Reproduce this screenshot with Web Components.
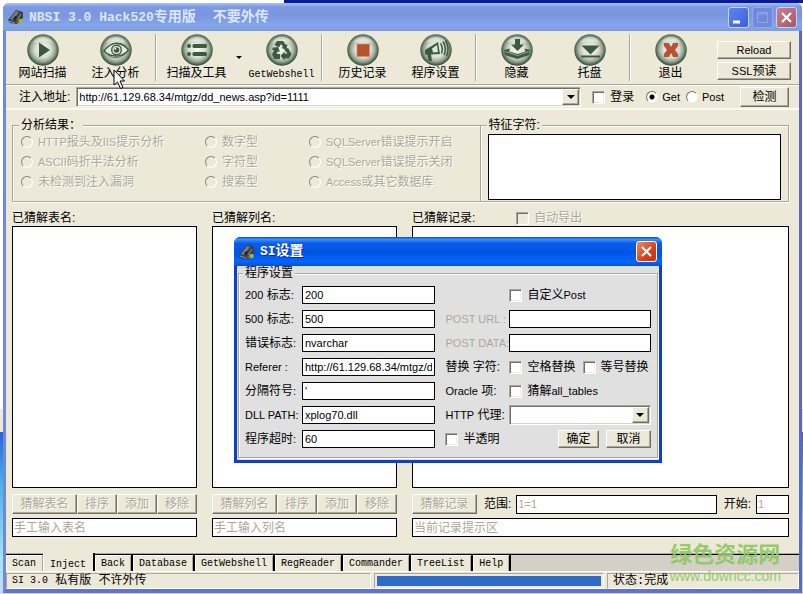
<!DOCTYPE html>
<html lang="zh-CN">
<head>
<meta charset="utf-8">
<title>NBSI 3.0</title>
<style>
html, body { margin: 0; min-height: 100vh; }
body {
  box-sizing: border-box;
  display: flex;
  padding: 3px 1px 1px 3px;
  font: 12px/14px "Liberation Sans", "Noto Sans CJK SC", sans-serif;
  color: #000;
  background:
    linear-gradient(90deg, #fff 284px, #0a1a96 284px) 0 0 / 100% 3px no-repeat,
    linear-gradient(#fff 409px, #ece9d8 409px 432px, #2a62d8 432px, #3fb0e4 480px, #a8e4f8 560px, #c8d8f8);
}
</style>
</head>
<body>
<app-window></app-window>
<script>
const latin = s => s.replace(/[\x21-\x7e](?:[\x20-\x7e]*[\x21-\x7e])?/g, m => `<span class="l">${m}</span>`);

const base = `
  *, *::before, *::after { box-sizing: border-box; }
  :host { --face: #ece9d8; --dim: #aca899; }
  .l { font-size: 11px; }
  .mono { font-family: "Liberation Mono", "Noto Sans CJK SC", monospace; }
  .mono .l { font-size: 10px; }
  button, input, select, textarea { font: inherit; color: inherit; margin: 0; border-radius: 0; outline: 0; }
  button { padding: 0; white-space: nowrap; }
  .btn { height: 20px; background: var(--btn, var(--face)); border: 1px solid; border-color: #fff #716f64 #716f64 #fff; box-shadow: inset -1px -1px #aca899; }
  .btn:disabled, .off { color: var(--dim); text-shadow: 1px 1px #fff; }
  .box { width: 100%; min-width: 0; height: 19px; padding: 0 2px; background: #fff; border: 1px solid #000; resize: none; display: block; font-size: 12px; }
  input.lat { font-size: 11px; }
  .box:disabled { color: #aca899; }
  .box::placeholder { color: #aca899; opacity: 1; }
  label { white-space: nowrap; }
  .opt { display: flex; align-items: center; gap: 5px; }
  input[type=checkbox] { appearance: none; flex: none; width: 13px; height: 13px; background: #fff; border: 1px solid; border-color: #aca899 #fff #fff #aca899; box-shadow: inset 1px 1px #716f64, inset -1px -1px #f1efe2; }
  input[type=checkbox]:checked { background: #444; }
  input[type=checkbox]:disabled { background: var(--face); }
  input[type=radio] { appearance: none; flex: none; width: 12px; height: 12px; border-radius: 50%; background: #fff; border: 1px solid; border-color: #716f64 #f6f4ea #f6f4ea #716f64; }
  input[type=radio]:disabled { background: var(--face); border-color: #8a877a #fff #fff #8a877a; }
  input[type=radio]:checked { background: radial-gradient(circle, #000 0 2px, #fff 3px); }
  fieldset { min-width: 0; margin: 0; padding: 0; border: 1px solid #aca899; box-shadow: inset 1px 1px #fff, 1px 1px #fff; }
  legend { padding: 0 2px; background: var(--face); }
  .combo { display: grid; min-width: 0; }
  .combo > * { grid-area: 1 / 1; }
  .combo select { appearance: none; width: 100%; min-width: 0; height: 20px; padding: 0 20px 0 2px; background: #fff; border: 1px solid; border-color: #aca899 #fff #fff #aca899; box-shadow: inset 1px 1px #716f64, inset -1px -1px #d8d4c4; font-size: 11px; }
  .drop { justify-self: end; align-self: center; margin-right: 2px; width: 17px; height: 16px; display: grid; place-items: center; pointer-events: none; background: var(--face); border: 1px solid; border-color: #fff #716f64 #716f64 #fff; box-shadow: inset -1px -1px #aca899; }
  .drop::after, .tri::after { content: ""; border: 4px solid transparent; border-top-color: #000; border-bottom: 0; }
`;

const define = (name, css, html) => customElements.define(name, class extends HTMLElement {
  constructor() {
    super();
    this.attachShadow({ mode: 'open' }).innerHTML =
      `<style>${base}${css}</style>${typeof html === 'function' ? html(this) : html}`;
  }
});

const G = '#3c5a3e';
const art = {
  play: `<path fill="${G}" d="M12 8.500L23 16L12 23.500Z"/>`,
  eye: `<path fill="#e4ebe2" stroke="${G}" stroke-width="1.300" d="M4 17Q10 9 17 9.500Q24 10 28.500 16Q23 22.500 16 22Q9 22 4 17Z"/><path fill="none" stroke="${G}" stroke-width=".8" d="M7 14Q15 5 26 12M8 21Q16 27 25 20"/><circle cx="16.500" cy="16" r="4.800" fill="none" stroke="${G}" stroke-width="1.400"/><circle cx="16.500" cy="16" r="2.800" fill="${G}"/><circle cx="15.300" cy="14.800" r="1" fill="#fff"/>`,
  list: `<g fill="${G}"><circle cx="8" cy="12" r="2"/><circle cx="8" cy="20" r="2"/><rect x="11.500" y="10" width="14.500" height="4" rx="1.500"/><rect x="11.500" y="18" width="14.500" height="4" rx="1.500"/></g>`,
  recycle: `<g fill="${G}"><path d="M11 7h6l3 4 1.500-1-1 5.500-5.500-1.500 2-1-2-3-2 3.500-4.500-2.500z"/><path d="M22 14l3.500 6-2.500 4.500h-4.500v2L14.500 22l4-4.500v2h3l-3.500-4z"/><path d="M7 13.500l5-.5 2 5-2-.700-1.500 2.700h3.500V25H8.500L6 20.500l2-4-2-.8z"/></g>`,
  stop: `<rect x="10" y="10" width="12.500" height="12.500" fill="#b8532f" stroke="#d78a68" stroke-width=".7"/>`,
  horn: `<path fill="${G}" d="M5 16L18 8L20 20L11 20.500L12 27L8.500 27L7.500 21L5 20Z"/><path fill="#dfe6dc" d="M12 14.500L17 11L18 18L13 18.500Z"/><path fill="none" stroke="${G}" stroke-width="1.500" d="M20.500 9.500Q23.500 14 21.500 19.500M23 7.500Q27 14 24 21M25.500 6.500Q30 14 26.500 22"/>`,
  hide: `<path fill="${G}" d="M14 5h5v5.500h4L16.500 17L10 10.500h4z"/><path fill="${G}" d="M3 16l6-1.500-1 3 8.500 2.500 8-2.500-1-3 5.500 1.500-1 5L16.500 25L4 21z"/><path fill="none" stroke="#b9c7b7" stroke-width=".7" d="M4 17.500L16.500 21.500L28 17.500"/>`,
  tray: `<path fill="${G}" d="M7.500 11.500h18L16.500 20.500z"/><rect x="7" y="21.500" width="19" height="2" fill="${G}"/>`,
  exit: `<path fill="#b9532f" d="M9 9h5l2 4 2-4h5v3l-3 4 3 4v3h-5l-2-4-2 4H9v-3l3-4-3-4z"/>`
};

define('app-glyph', `:host{display:block;flex:none;width:17px;height:16px} svg{display:block;width:100%;height:100%}`,
  `<svg viewBox="0 0 17 16"><path fill="#3b3f42" d="M0 11L8 1L15 3L15 9L9 15L2 14Z"/><path fill="#777c80" d="M2 10L8 2L11 3L5 11Z"/><path stroke="#8d9296" d="M9 11L13 5M1 12L7 14"/><path fill="#1d2022" d="M7 7l2 1-2 3-2-1z"/><circle cx="12.500" cy="12" r="2.300" fill="#8fbd3e"/><circle cx="9.500" cy="13" r="1.300" fill="#b04a38"/></svg>`);

define('title-bar', `
  :host { display: flex; align-items: center; height: 28px; padding: 0 5px 0 5px; gap: 4px; border-radius: 6px 6px 0 0; color: #dbe6fa; background: linear-gradient(#a9c4f4, #7d99e2 14%, #7b96e0 45%, #82a6ea 80%, #7c9ce4); }
  :host([active]) { height: 29px; color: #fff; text-shadow: 1px 1px #0a2a9a; background: linear-gradient(#0a48c0, #3a92ff 8%, #0a5be8 22%, #0054e3 55%, #0566fb 85%, #0450d8); }
  h1 { flex: 1; margin: 0; font: bold 14px/18px "Liberation Mono", "Noto Sans CJK SC", monospace; white-space: pre; }
  .l { font-size: 13px; }
  .ctl { display: flex; gap: 3px; }
  button { display: block; width: 21px; height: 21px; border: 1px solid #c5d3f5; border-radius: 3px; background: linear-gradient(135deg, #5f86ee, #3b60d8); }
  button svg { display: block; }
  .max { background: #7089dd; border-color: #92a8e8; }
  .close { background: linear-gradient(135deg, #c98090, #a85766); }
  :host([active]) .close { border-color: #fff; background: linear-gradient(135deg, #f08a68, #d8401c 60%, #c03410); }
`, el => {
  const b = (c, n, p) => `<button type="button" class="${c}" aria-label="${n}"><svg width="19" height="19" viewBox="0 0 19 19" fill="none">${p}</svg></button>`;
  const x = b('close', '关闭', '<path stroke="#fff" stroke-width="2.200" d="M5 5L14 14M14 5L5 14"/>');
  return `<app-glyph></app-glyph><h1>${latin(el.getAttribute('caption'))}</h1><div class="ctl">${el.hasAttribute('active') ? x :
    b('min', '最小化', '<path stroke="#fff" stroke-width="3" d="M4 14H11"/>') + b('max', '最大化', '<path stroke="#91a6ea" d="M4.500 4.500h10v10h-10zM4 6h11"/>') + x}</div>`;
});

define('tool-button', `
  :host { display: block; flex: 0 0 73px; }
  button { width: 100%; border: 0; background: none; display: flex; flex-direction: column; align-items: center; }
  svg { display: block; width: 32px; height: 32px; }
  .t { line-height: 16px; }
`, el => `<button type="button"><svg viewBox="0 0 32 32"><defs><radialGradient id="g" cx=".5" cy=".48" r=".52"><stop offset="0" stop-color="#f8f9f6"/><stop offset=".5" stop-color="#d8ddd4"/><stop offset=".75" stop-color="#9aa797"/><stop offset=".92" stop-color="#4d664c"/><stop offset="1" stop-color="#243c25"/></radialGradient></defs><circle cx="16" cy="16" r="15.700" fill="url(#g)"/><path fill="#fff" opacity=".45" d="M6 9Q9 3 16 3Q23 3 26 9Q16 5 6 9Z"/>${art[el.getAttribute('icon')]}</svg><span class="t mono">${latin(el.getAttribute('text'))}</span></button>`);

define('tool-bar', `
  :host { display: flex; height: 54px; padding-top: 3px; border-bottom: 1px solid #aca899; }
  hr { flex: none; width: 2px; height: 47px; margin: 0 3px; border: 0; border-left: 1px solid #aca899; border-right: 1px solid #fff; }
  .tri { flex: 0 0 12px; height: 47px; border: 0; background: none; display: grid; place-items: center; }
  .tri::after { border-width: 3px 3px 0; width: 0; }
  .side { margin: 7px 8px 0 auto; flex: 0 0 74px; display: flex; flex-direction: column; gap: 3px; }
  .btn { height: 18px; line-height: 14px; }
`, `<tool-button icon="play" text="网站扫描"></tool-button><tool-button icon="eye" text="注入分析"></tool-button><hr>
  <tool-button icon="list" text="扫描及工具"></tool-button><button class="tri" type="button" aria-label="更多"></button><tool-button icon="recycle" text="GetWebshell"></tool-button><hr>
  <tool-button icon="stop" text="历史记录"></tool-button><tool-button icon="horn" text="程序设置"></tool-button><hr>
  <tool-button icon="hide" text="隐藏"></tool-button><tool-button icon="tray" text="托盘"></tool-button><hr>
  <tool-button icon="exit" text="退出"></tool-button>
  <div class="side"><button type="button" class="btn">${latin('Reload')}</button><button type="button" class="btn">${latin('SSL预读')}</button></div>`);

define('address-bar', `
  :host { display: flex; align-items: center; height: 25px; padding: 0 10px 0 13px; border-top: 1px solid #fff; border-bottom: 2px solid #fbfaf2; }
  .combo { flex: 1; margin: 0 11px 0 6px; }
  .opt + .opt { margin-left: 6px; }
  .login + .opt { margin-left: 12px !important; }
  .r { gap: 4px; }
  .btn { width: 49px; margin-left: 16px; }
`, `<label for="u">注入地址:</label>
  <div class="combo"><select id="u"><option>http://61.129.68.34/mtgz/dd_news.asp?id=1111</option></select><span class="drop"></span></div>
  <label class="opt login"><input type="checkbox">登录</label>
  <label class="opt r"><input type="radio" name="m" checked>${latin('Get')}</label>
  <label class="opt r"><input type="radio" name="m">${latin('Post')}</label>
  <button type="button" class="btn">检测</button>`);

const radio = t => `<label class="opt off"><input type="radio" name="r" disabled><span>${latin(t)}</span></label>`;
define('analysis-panel', `
  :host { display: flex; margin: 8px 10px 0 6px; }
  fieldset { height: 84px; }
  .a { flex: 469; } .b { flex: 309; margin-left: -1px; }
  .grid { display: grid; grid-template-columns: 184px 104px auto; grid-auto-rows: 20px; padding: 0 0 0 8px; }
  legend { height: 14px; margin-left: 6px; }
  .box { height: 66px; }
  .b div { padding: 2px 7px 0 7px; }
`, `<fieldset class="a"><legend>分析结果：</legend><div class="grid">
  ${['HTTP报头及IIS提示分析', '数字型', 'SQLServer错误提示开启', 'ASCII码折半法分析', '字符型', 'SQLServer错误提示关闭', '未检测到注入漏洞', '搜索型', 'Access或其它数据库'].map(radio).join('')}</div></fieldset>
  <fieldset class="b"><legend>特征字符:</legend><div><textarea class="box" aria-label="特征字符"></textarea></div></fieldset>`);

define('guess-column', `
  :host { display: flex; flex-direction: column; min-width: 0; }
  .head { display: flex; align-items: center; height: 16px; }
  .head .opt { margin-left: 41px; }
  .list { flex: 1; min-height: 60px; border: 1px solid #000; background: #fff; margin-bottom: 6px; }
  .tools { display: grid; grid-template-columns: 65fr 40fr 40fr 40fr; height: 20px; margin-bottom: 4px; }
  .rec { grid-template-columns: 65px auto 201fr auto 33fr; align-items: center; }
  .rec label { margin: 0 5px 0 7px; }
  .box { padding: 0 1px; }
`, el => {
  const n = el.getAttribute('noun'), rec = n === '记录';
  const b = t => `<button type="button" class="btn" disabled>${t}</button>`;
  return `<div class="head"><span>已猜解${n}:</span>${rec ? '<label class="opt off"><input type="checkbox" disabled>自动导出</label>' : ''}</div>
    <div class="list" role="listbox" aria-label="${n}"></div>
    ${rec ? `<div class="tools rec">${b('猜解记录')}<label for="s">范围:</label><input id="s" class="box lat" value="1=1" disabled><label for="k">开始:</label><input id="k" class="box lat" value="1" disabled></div>`
      : `<div class="tools">${b('猜解' + n)}${b('排序')}${b('添加')}${b('移除')}</div>`}
    <input class="box" aria-label="${n}" placeholder="${rec ? '当前记录提示区' : '手工输入' + n}">`;
});

define('page-tabs', `
  :host { display: flex; height: 18px; margin-top: 16px; background: #d4d0c8; border-top: 1px solid #aca899; }
  nav { display: flex; flex: 1; border-top: 1px solid #000; }
  button { padding: 0 6px; border: 0; border-right: 2px solid #000; background: var(--face); box-shadow: inset 1px 1px #fff, inset -1px 0 #aca899; line-height: 16px; }
  button:first-child { border-right: 0; padding: 0 7px 0 6px; }
  button[aria-selected=true] { margin-top: -2px; padding: 3px 7px 0; box-shadow: inset 1px 0 #fff; }
`, `<nav class="mono" role="tablist">${['Scan', 'Inject', 'Back', 'Database', 'GetWebshell', 'RegReader', 'Commander', 'TreeList', 'Help'].map((t, i) => `<button type="button" role="tab" aria-selected="${i === 1}">${latin(t)}</button>`).join('')}</nav>`);

define('status-bar', `
  :host { display: grid; grid-template-columns: 365fr 230fr 192fr; gap: 3px; height: 18px; padding-top: 1px; border-top: 1px solid #fff; }
  div { display: flex; align-items: center; padding: 0 5px; border: 1px solid; border-color: #aca899 #fff #fff #aca899; white-space: pre; }
  .p { padding: 0 2px; }
  progress { appearance: none; width: 100%; height: 10px; border: 0; }
  progress::-webkit-progress-bar { background: var(--face); }
  progress::-webkit-progress-value { background: #316ac5; }
`, `<div class="mono">${latin('SI 3.0')} 私有版 不许外传</div><div class="p"><progress value="1" max="1" aria-label="进度"></progress></div><div class="mono">状态:完成</div>`);

const chk = t => `<label class="opt"><input type="checkbox"><span>${latin(t)}</span></label>`;
define('settings-dialog', `
  :host { --face: #e0e0e0; display: block; background: #e0e0e0; border: solid #0b3fd0; border-width: 0 3px 3px; border-radius: 7px 7px 0 0; }
  title-bar { margin: 0 -3px; }
  fieldset { margin: 0 1px 2px; padding: 6px 6px 9px; --btn: #ece9d8; }
  legend { margin-left: -2px; }
  .drop { background: #ece9d8; }
  form { display: grid; grid-template-columns: 57px 133fr 74px 141fr; grid-auto-rows: 18px; row-gap: 6px; align-items: center; }
  .box { height: 18px; }
  .q { padding-left: 10px; white-space: nowrap; }
  .dim { color: #aca899; }
  .pair, .end { display: flex; align-items: center; gap: 7px; }
  .end { grid-column: 3 / 5; padding-left: 10px; }
  .end .btn { height: 18px; width: 45px; }
  .end .btn:first-of-type { margin-left: auto; width: 41px; }
`, () => {
  const f = (id, l, v) => `<label for="${id}">${latin(l)}</label><input class="box lat" id="${id}" value="${v}">`;
  return `<title-bar active caption="SI设置"></title-bar><fieldset><legend>程序设置</legend><form>
    ${f('a', '200 标志:', '200')}<span></span>${chk('自定义Post')}
    ${f('b', '500 标志:', '500')}<label class="q dim" for="h">${latin('POST URL :')}</label><input class="box" id="h">
    ${f('c', '错误标志:', 'nvarchar')}<label class="q dim" for="i">${latin('POST DATA:')}</label><input class="box" id="i">
    ${f('d', 'Referer :', 'http://61.129.68.34/mtgz/dd_news.asp')}<span class="q">替换 字符:</span><div class="pair">${chk('空格替换')}${chk('等号替换')}</div>
    ${f('e', '分隔符号:', "'")}<span class="q">${latin('Oracle')} 项:</span>${chk('猜解all_tables')}
    ${f('f', 'DLL PATH:', 'xplog70.dll')}<label class="q" for="j">${latin('HTTP')} 代理:</label><div class="combo"><select id="j"><option></option></select><span class="drop"></span></div>
    ${f('g', '程序超时:', '60')}<div class="end">${chk('半透明')}<button type="button" class="btn">确定</button><button type="button" class="btn">取消</button></div>
  </form></fieldset>`;
});

define('water-mark', `
  :host { display: block; color: #8cc860; opacity: .9; text-align: center; pointer-events: none; }
  b { display: block; font: bold 22px/32px "Noto Sans CJK SC", sans-serif; }
  i { display: block; font: normal 14px/16px "Liberation Sans", sans-serif; }
`, `<b>绿色资源网</b><i>www.downcc.com</i>`);

define('app-window', `
  :host { position: relative; flex: 1; min-width: 0; display: flex; flex-direction: column; background: var(--face); border: solid #7486d8; border-width: 0 3px 4px; border-right-color: #5a68c8; border-bottom-color: #6172d0; border-radius: 6px 6px 0 0; }
  title-bar { margin: 0 -3px; }
  main { flex: 1; display: grid; grid-template-columns: 185fr 185fr 377fr; gap: 15px; margin: 8px 10px 0 6px; }
  settings-dialog { position: absolute; left: 228px; top: 234px; width: 428px; }
  water-mark { position: absolute; right: 18px; bottom: 5px; }
  .cursor { position: absolute; left: 107px; top: 66px; width: 13px; height: 21px; pointer-events: none; }
`, `<title-bar caption="NBSI 3.0 Hack520专用版&nbsp; 不要外传"></title-bar>
  <tool-bar></tool-bar><address-bar></address-bar><analysis-panel></analysis-panel>
  <main><guess-column noun="表名"></guess-column><guess-column noun="列名"></guess-column><guess-column noun="记录"></guess-column></main>
  <page-tabs></page-tabs><status-bar></status-bar>
  <settings-dialog role="dialog" aria-label="SI设置"></settings-dialog>
  <water-mark></water-mark>
  <svg class="cursor" viewBox="0 0 13 21"><path fill="#fff" stroke="#000" d="M1 1V16L4.500 13L7.500 19.500L10 18.500L7 12H11.500Z"/></svg>`);
</script>
</body>
</html>
